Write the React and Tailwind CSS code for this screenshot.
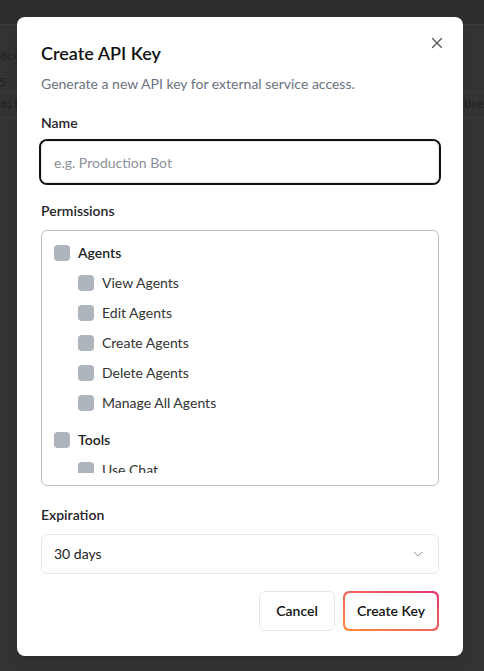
import { X, ChevronDown } from 'lucide-react';

const groups = [
  { name: 'Agents', items: ['View Agents', 'Edit Agents', 'Create Agents', 'Delete Agents', 'Manage All Agents'] },
  { name: 'Tools', items: ['Use Chat'] },
];

function Box() {
  return <span className="h-4 w-4 shrink-0 rounded-[4px] bg-[#adb4bc]" />;
}

function Backdrop() {
  return (
    <div className="h-full w-full bg-[#333333] font-['DejaVu_Sans_Mono',monospace] text-[11px] text-[#1f1f1f]">
      <div className="h-[25px] bg-[#2d2d2d] border-b border-[#3c3c3c]" />
      <div className="h-[68px] border-b border-[#3c3c3c] pt-[19px] leading-[26px]">
        <div>0c4f</div>
        <div>5</div>
      </div>
      <div className="flex h-[25px] items-center justify-between border-b border-[#3c3c3c]">
        <span>dit</span>
        <span>Use</span>
      </div>
    </div>
  );
}

export default function App() {
  return (
    <div className="relative h-[671px] w-[484px] overflow-hidden font-['Lato',sans-serif]">
      <Backdrop />

      <div className="absolute left-[17px] top-[17px] w-[446px] rounded-lg bg-white px-6 pt-[22px] pb-[25px] shadow-lg">
        <button className="absolute right-[17px] top-[17px] text-[#555]">
          <X size={18} strokeWidth={1.8} />
        </button>

        <h2 className="text-lg leading-7 font-semibold text-[#111]">Create API Key</h2>
        <p className="mt-[7px] text-sm leading-5 text-[#6b7280]">Generate a new API key for external service access.</p>

        <label className="mt-[19px] block text-sm leading-5 font-semibold text-[#1f2328]">Name</label>
        <input
          placeholder="e.g. Production Bot"
          className="mt-2 h-[42px] w-full rounded-md border border-[#e5e7eb] px-[12px] text-sm text-[#111] placeholder:text-[#8b9098] outline-none ring-2 ring-[#111]"
        />

        <div className="mt-[18px] text-sm leading-5 font-semibold text-[#1f2328]">Permissions</div>
        <div className="mt-[9px] rounded-md border border-[#b9c0c7] p-3">
          <div className="h-[230px] overflow-hidden">
            {groups.map((g) => (
              <div key={g.name} className="mb-[17px]">
                <div className="flex h-5 items-center gap-2 text-sm font-semibold text-[#222]">
                  <Box />
                  {g.name}
                </div>
                <div className="mt-2.5 flex flex-col gap-2.5 pl-6">
                  {g.items.map((it) => (
                    <div key={it} className="flex h-5 items-center gap-2 text-sm text-[#333]">
                      <Box />
                      {it}
                    </div>
                  ))}
                </div>
              </div>
            ))}
          </div>
        </div>

        <div className="mt-[19px] text-sm leading-5 font-semibold text-[#1f2328]">Expiration</div>
        <div className="mt-[9px] flex h-10 items-center justify-between rounded-md border border-[#e5e7eb] pl-3 pr-3 text-sm text-[#222]">
          <span>30 days</span>
          <ChevronDown size={16} strokeWidth={1.5} className="text-[#999]" />
        </div>

        <div className="mt-[17px] flex justify-end gap-2">
          <button className="h-10 w-[76px] rounded-md border border-[#e5e7eb] text-sm font-semibold text-[#111]">Cancel</button>
          <div className="h-10 w-24 rounded-md bg-linear-to-tr from-[#fb8c3a] to-[#e2306c] p-[2px]">
            <button className="h-full w-full rounded-[5px] bg-white text-sm font-semibold text-[#111]">Create Key</button>
          </div>
        </div>
      </div>
    </div>
  );
}
